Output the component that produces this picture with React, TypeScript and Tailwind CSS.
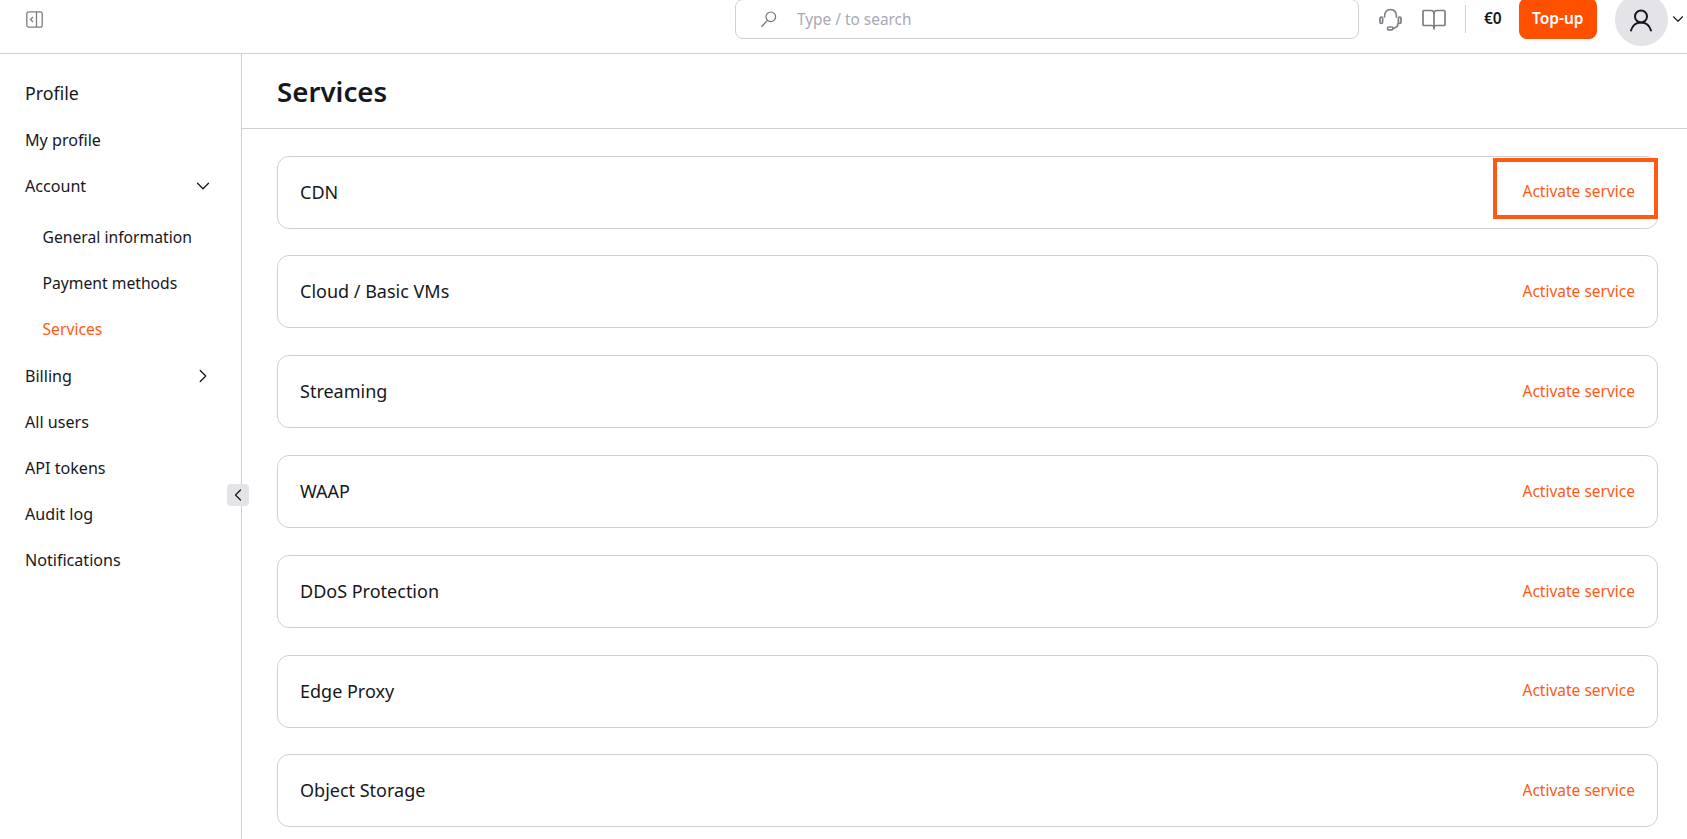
import React from "react";
import { ChevronDown, ChevronLeft, ChevronRight } from "lucide-react";

const services = [
  "CDN",
  "Cloud / Basic VMs",
  "Streaming",
  "WAAP",
  "DDoS Protection",
  "Edge Proxy",
  "Object Storage",
];

function PanelIcon() {
  return (
    <svg width="17" height="17" viewBox="0 0 17 17" fill="none" stroke="#7d7d86" strokeWidth="1.3">
      <rect x="0.8" y="0.8" width="15.4" height="15.4" rx="2" />
      <path d="M10.5 1v15" />
      <path d="M7 6 4.500 8.500 7 11" />
    </svg>
  );
}

function SearchIcon() {
  return (
    <svg width="17" height="17" viewBox="0 0 17 17" fill="none" stroke="#6f6f78" strokeWidth="1.2">
      <circle cx="10.800" cy="5.800" r="4.800" />
      <path d="M7.300 9.300 1.500 15.800" />
    </svg>
  );
}

function HeadsetIcon() {
  return (
    <svg width="23" height="23" viewBox="0 0 23 23" fill="none" stroke="#7d7d86" strokeWidth="1.7" strokeLinecap="round">
      <rect x="1" y="9" width="2.600" height="6.500" rx="1.300" />
      <rect x="19.400" y="9" width="2.600" height="6.500" rx="1.300" />
      <path d="M5.500 9C5.500 4 8 1.500 11.500 1.500S17.500 4 17.500 9" />
      <path d="M19 15.500c0 2.800-1.500 4.300-5 4.700" />
      <rect x="8.500" y="19" width="5.500" height="2.800" rx="1.400" />
    </svg>
  );
}

function BookIcon() {
  return (
    <svg width="24" height="21" viewBox="0 0 24 21" fill="none" stroke="#7d7d86" strokeWidth="1.7" strokeLinejoin="round">
      <path d="M1 2.500a1 1 0 0 1 1-1h7c1.500 0 3 1 3 2.500 0-1.500 1.500-2.500 3-2.500h7a1 1 0 0 1 1 1v13a1 1 0 0 1-1 1h-7.500c-1 0-2.500.5-2.500 2 0-1.500-1.500-2-2.500-2H2a1 1 0 0 1-1-1Z" />
      <path d="M12 4v16.500" />
    </svg>
  );
}

function UserIcon() {
  return (
    <svg width="24" height="24" viewBox="0 0 24 24" fill="none" stroke="#17171c" strokeWidth="2" strokeLinecap="round">
      <circle cx="12" cy="8.500" r="6" />
      <path d="M2 22.500C3.500 17.500 7 14.500 12 14.500s8.500 3 10 8" />
    </svg>
  );
}

function NavRow({ label, icon, sub, active }: { label: string; icon?: React.ReactNode; sub?: boolean; active?: boolean }) {
  return (
    <div className={`flex h-[46px] items-center justify-between pr-[27px] ${sub ? "pl-[42.500px] text-[15.7px]" : "pl-[25px] text-[16.1px]"} ${active ? "text-[#ff5a14]" : "text-[#17171c]"}`}>
      <span>{label}</span>
      {icon}
    </div>
  );
}

export default function App() {
  return (
    <div className="flex h-[839px] w-[1687px] flex-col overflow-hidden bg-white font-['Noto_Sans',sans-serif] text-[#17171c]">
      <header className="flex h-[54px] shrink-0 items-start border-b border-[#d0d0d4]">
        <div className="ml-[26px] mt-[11px]">
          <PanelIcon />
        </div>
        <div className="ml-[692px] flex h-[40px] w-[624px] -mt-[1px] items-center rounded-lg border border-[#d0d0d4] pl-[24px]">
          <SearchIcon />
          <span className="ml-[20px] pt-[2px] text-[15.400px] text-[#a9a9b3]">Type / to search</span>
        </div>
        <div className="ml-[20px] mt-[8px]">
          <HeadsetIcon />
        </div>
        <div className="ml-[20px] mt-[9px]">
          <BookIcon />
        </div>
        <div className="ml-[19px] mt-[5px] h-[28px] w-px bg-[#d0d0d4]" />
        <span className="ml-[18px] mt-[7px] text-[15.500px] font-semibold">€0</span>
        <button className="ml-[17px] -mt-[2px] flex h-[41px] w-[78px] items-center justify-center rounded-lg bg-[#ff5000] text-[15.500px] font-semibold text-white">
          Top-up
        </button>
        <div className="ml-[18px] -mt-[7px] flex h-[53px] w-[53px] shrink-0 items-center justify-center rounded-full bg-[#e4e4e8]">
          <UserIcon />
        </div>
        <ChevronDown className="ml-[1px] mt-[10px] h-[18px] w-[18px] text-[#17171c]" strokeWidth={1.5} />
      </header>

      <div className="flex min-h-0 flex-1">
        <aside className="relative w-[242px] shrink-0 border-r border-[#d0d0d4] pt-[16px]">
          <div className="flex h-[47px] items-center pl-[25px] text-[17.800px]">Profile</div>
          <NavRow label="My profile" />
          <NavRow label="Account" icon={<ChevronDown className="h-[22px] w-[22px]" strokeWidth={1.4} />} />
          <div className="h-[6px]" />
          <NavRow label="General information" sub />
          <NavRow label="Payment methods" sub />
          <NavRow label="Services" sub active />
          <NavRow label="Billing" icon={<ChevronRight className="h-[22px] w-[22px]" strokeWidth={1.4} />} />
          <NavRow label="All users" />
          <NavRow label="API tokens" />
          <NavRow label="Audit log" />
          <NavRow label="Notifications" />
          <div className="absolute right-[-8px] top-[430px] flex h-[22px] w-[22px] items-center justify-center rounded bg-[#e4e4e8]">
            <ChevronLeft className="h-[20px] w-[20px]" strokeWidth={1.5} />
          </div>
        </aside>

        <main className="min-w-0 flex-1">
          <div className="flex h-[75px] items-center border-b border-[#d0d0d4] pl-[35px] pt-[2px] text-[27.700px] font-semibold">
            Services
          </div>
          <div className="ml-[35px] mr-[29px] mt-[26.600px] flex flex-col gap-[26.800px]">
            {services.map((name, i) => (
              <div key={name} className="relative flex h-[73px] shrink-0 items-center justify-between rounded-xl border border-[#d0d0d4] pl-[22px] pr-[22px]">
                <span className="text-[18px]">{name}</span>
                <span className="text-[15.500px] text-[#ff5a14]">Activate service</span>
                {i === 0 && <div className="absolute -right-px top-[1px] h-[61px] w-[165px] border-[4px] border-[#ff5a14]" />}
              </div>
            ))}
          </div>
        </main>
      </div>
    </div>
  );
}
